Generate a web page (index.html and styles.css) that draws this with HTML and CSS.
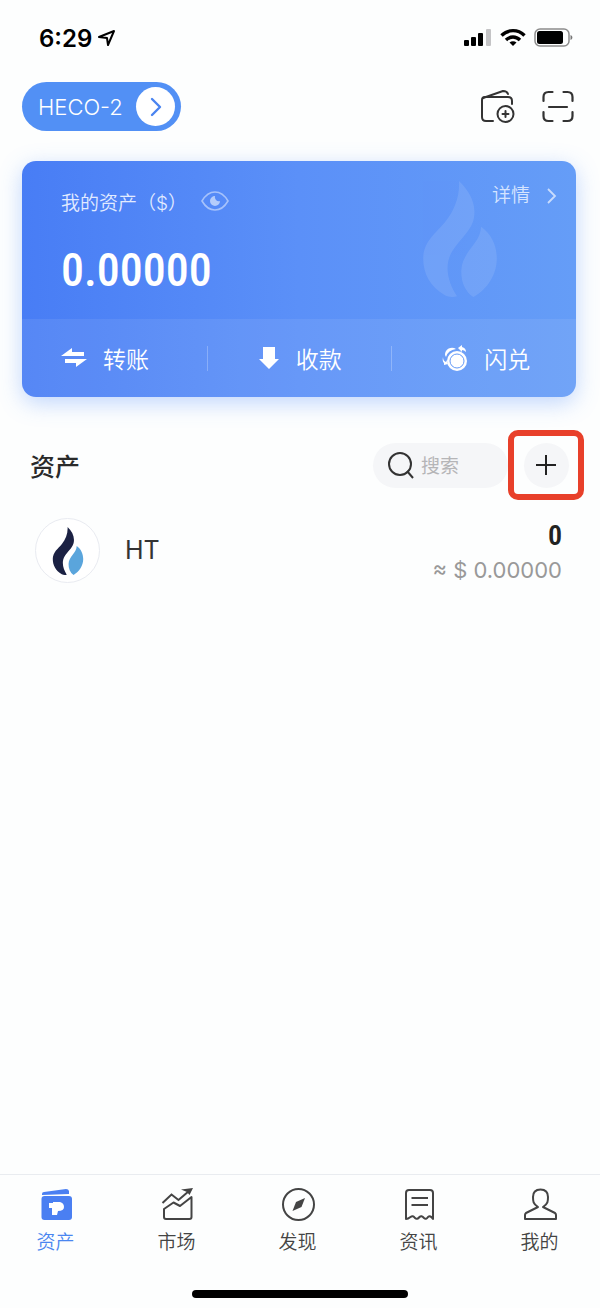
FILE: index.html
```html
<!DOCTYPE html>
<html lang="zh-CN">
<head>
    <meta charset="UTF-8">
    <meta name="viewport" content="width=device-width, initial-scale=1.0">
    <title>HECO-2 钱包</title>
    <link rel="stylesheet" href="styles.css">
</head>
<body>
    <svg width="0" height="0" class="defs" aria-hidden="true">
        <symbol id="flame" viewBox="0 0 220 347">
            <path class="flame-left" d="M107 0C140 32 158 68 152 108C148 145 112 171 88 208C60 252 74 302 101 345C88 348 76 347 65 342C20 316 0 277 0 232C0 180 40 155 66 122C94 88 110 45 107 0Z"/>
            <path class="flame-right" d="M173 137C204 158 220 194 220 232C220 280 192 324 150 347C125 330 113 302 114 268C116 210 172 188 173 137Z"/>
        </symbol>
    </svg>

    <div class="status-bar">
        <div class="status-left">
            <span class="time">6:29</span>
            <svg width="18" height="18" viewBox="0 0 18 18" fill="none" stroke="#000" stroke-width="2" stroke-linejoin="round">
                <path d="M1 8L16 2L10 16L9 9Z"/>
            </svg>
        </div>
        <div class="status-right">
            <svg width="28" height="20" viewBox="0 0 28 20">
                <rect x="0" y="12" width="5" height="6" rx="1"/>
                <rect x="7" y="9" width="5" height="9" rx="1"/>
                <rect x="14" y="5" width="5" height="13" rx="1"/>
                <rect x="22" y="1" width="5" height="17" rx="1" fill="#c4c4c6"/>
            </svg>
            <svg width="26" height="20" viewBox="0 0 26 20" fill="none" stroke="#000" stroke-width="3.4">
                <path d="M1.500 7.500C8 1 18 1 24.500 7.500"/>
                <path d="M6 12C10 8 16 8 20 12"/>
                <path d="M13 18L9.500 14.500C11.500 12.800 14.500 12.800 16.500 14.500Z" fill="#000" stroke="none"/>
            </svg>
            <svg width="39" height="20" viewBox="0 0 39 20">
                <rect x="1" y="1" width="34" height="17" rx="5" fill="none" stroke="#8c8c8c" stroke-width="1.500"/>
                <rect x="3" y="3" width="26" height="13" rx="2.500"/>
                <path d="M36.500 7C39 8 39 11 36.500 12Z" fill="#777"/>
            </svg>
        </div>
    </div>

    <header class="top-bar">
        <button class="network">
            <span>HECO-2</span>
            <span class="network-arrow">
                <svg width="14" height="20" viewBox="0 0 14 20" fill="none" stroke="#4a84f0" stroke-width="2.400" stroke-linecap="round" stroke-linejoin="round">
                    <path d="M3 2L11 10L3 18"/>
                </svg>
            </span>
        </button>
        <div class="top-actions">
            <button aria-label="添加钱包">
                <svg width="34" height="34" viewBox="0 0 34 34" fill="none" stroke="#333" stroke-width="2" stroke-linecap="round" stroke-linejoin="round">
                    <path d="M12 31H5Q1 31 1 27V10Q1 7 4 7H27Q31 7 31 11V14"/>
                    <path d="M2 8L22 1Q26 1 27 4"/>
                    <circle cx="24.500" cy="24" r="8"/>
                    <path d="M21.500 24H27.500M24.500 21V27"/>
                </svg>
            </button>
            <button aria-label="扫一扫">
                <svg width="32" height="34" viewBox="0 0 32 34" fill="none" stroke="#333" stroke-width="2.200" stroke-linecap="round">
                    <path d="M1.500 11V7Q1.500 2 6.500 2H10.500M21.500 2H25.500Q30.500 2 30.500 7V11M30.500 22V26Q30.500 31 25.500 31H21.500M10.500 31H6.500Q1.500 31 1.500 26V22"/>
                    <path d="M7 17H25"/>
                </svg>
            </button>
        </div>
    </header>

    <section class="card">
        <div class="card-main">
            <div class="card-label">
                <span>我的资产（$）</span>
                <button aria-label="隐藏金额">
                    <svg width="28" height="20" viewBox="0 0 28 20" fill="none" stroke="#a6c2fb" stroke-width="1.600">
                        <path d="M1 10C8 -2 20 -2 27 10C20 22 8 22 1 10Z"/>
                        <path d="M14 5A5 5 0 1 0 19 10A4 4 0 0 1 14 5Z" fill="#b4ccfb" stroke="none"/>
                    </svg>
                </button>
            </div>
            <div class="card-amount">0.00000</div>
            <svg class="card-flame" width="74" height="116"><use href="#flame"/></svg>
            <a href="#" class="card-detail">
                详情
                <svg width="12" height="18" viewBox="0 0 12 18" fill="none" stroke="#c9dcfd" stroke-width="1.800">
                    <path d="M2 2L9 9L2 16"/>
                </svg>
            </a>
        </div>
        <div class="card-actions">
            <button>
                <svg width="26" height="22" viewBox="0 0 26 22" fill="#fff">
                    <path d="M0 9L11 1V5H23V9Z"/>
                    <path d="M26 12L15 20V16H4V12Z"/>
                </svg>
                转账
            </button>
            <button>
                <svg width="22" height="22" viewBox="0 0 22 22" fill="#fff">
                    <path d="M5 0H17V12H21L11 22L1 12H5Z"/>
                </svg>
                收款
            </button>
            <button>
                <svg width="26" height="28" viewBox="0 0 26 28" fill="#fff">
                    <path d="M3 11A7 7 0 0 1 14 5Q6 6 4 13Z"/>
                    <path d="M16 4L20 1V3Q24 4 24 8Q22 6 20 6V8Z"/>
                    <path d="M1 13Q1 17 4 18V16L6 20L2 21V19Q0 17 1 13Z"/>
                    <circle cx="15" cy="17" r="10"/>
                    <circle cx="15" cy="17" r="7" fill="none" stroke="#6399f7"/>
                </svg>
                闪兑
            </button>
        </div>
    </section>

    <main>
        <div class="assets-head">
            <h1>资产</h1>
            <label class="search">
                <svg width="28" height="28" viewBox="0 0 28 28" fill="none" stroke="#333" stroke-width="2">
                    <circle cx="13" cy="13" r="11"/>
                    <path d="M20 20L26 27"/>
                </svg>
                <input type="text" placeholder="搜索" aria-label="搜索">
            </label>
            <div class="highlight">
                <button class="add" aria-label="添加资产">
                    <svg width="20" height="20" viewBox="0 0 20 20" stroke="#222" stroke-width="2">
                        <path d="M0 10H20M10 0V20"/>
                    </svg>
                </button>
            </div>
        </div>

        <div class="asset">
            <div class="coin"><svg width="32" height="48"><use href="#flame"/></svg></div>
            <span class="asset-name">HT</span>
            <div class="asset-value">
                <div class="asset-amount">0</div>
                <div class="asset-fiat">≈ $ 0.00000</div>
            </div>
        </div>
    </main>

    <nav class="tabs">
        <a href="#" class="active">
            <svg width="36" height="36" viewBox="0 0 36 36" fill="#4a7ff2">
                <path d="M4 9V8Q4 6 6 6L28 3Q30.500 3 31 5V8Z"/>
                <rect x="3.500" y="10" width="30.500" height="24" rx="3"/>
                <path d="M11 17H15V16H22Q26 17 26 21Q26 25 20 25L19 29H14V22H11Z" fill="#fff"/>
            </svg>
            资产
        </a>
        <a href="#">
            <svg width="36" height="36" viewBox="0 0 36 36" fill="none" stroke="#444" stroke-width="2">
                <path d="M3.500 17L12.500 8.500L19.500 14L30 5"/>
                <path d="M22 3.500L34 2L30.500 9L28 6Z" fill="#444" stroke="none"/>
                <path d="M32.500 11V31Q32.500 33 30.500 33H7Q5 33 5 31V23L14.500 16.500L21 20Z" stroke-linejoin="round"/>
            </svg>
            市场
        </a>
        <a href="#">
            <svg width="36" height="36" viewBox="0 0 36 36" fill="none" stroke="#444" stroke-width="2">
                <circle cx="18.500" cy="18.500" r="15.500"/>
                <path d="M25 12L21.500 21L12.500 25L16 16Z" fill="#444" stroke="none"/>
            </svg>
            发现
        </a>
        <a href="#">
            <svg width="36" height="36" viewBox="0 0 36 36" fill="none" stroke="#444" stroke-width="2" stroke-linejoin="round">
                <path d="M5 33V7Q5 4 8 4H29Q32 4 32 7V33Q29.500 29 27 31Q25 34 23 32Q20.500 29 18.500 31Q16 34 14 32Q12 29 9.500 31Q7 33 5 33Z"/>
                <path d="M10.500 12H27M10.500 19H27"/>
            </svg>
            资讯
        </a>
        <a href="#">
            <svg width="36" height="36" viewBox="0 0 36 36" fill="none" stroke="#444" stroke-width="2" stroke-linejoin="round">
                <path d="M16 21C11 18 11 15 11 11C11 6 14 3.500 18.500 3.500S26 6 26 11C26 15 26 18 21 21L33 27Q34 28 34 29V33H3V29Q3 28 4 27Z"/>
            </svg>
            我的
        </a>
    </nav>
    <div class="home-bar"></div>
</body>
</html>
```
FILE: styles.css
```css
* {
    box-sizing: border-box;
}
body {
    margin: 0;
    min-height: 100vh;
    display: flex;
    flex-direction: column;
    background: #fdfefe;
    color: #333;
    font-family: Inter, "Noto Sans CJK SC", sans-serif;
}
svg {
    display: block;
    flex: none;
}
button {
    padding: 0;
    border: none;
    background: none;
    color: inherit;
    font: inherit;
    cursor: pointer;
}
a {
    color: inherit;
    text-decoration: none;
}
.defs {
    position: absolute;
}

/* status bar */
.status-bar {
    height: 76px;
    padding: 0 27px 0 39px;
    display: flex;
    align-items: center;
    justify-content: space-between;
    color: #000;
}
.status-left {
    display: flex;
    align-items: center;
    gap: 6px;
}
.time {
    font-size: 24px;
    font-weight: 600;
}
.status-right {
    display: flex;
    gap: 8px;
}

/* network + actions */
.top-bar {
    padding: 6px 26px 0 22px;
    display: flex;
    align-items: center;
    justify-content: space-between;
}
.network {
    height: 49px;
    padding: 0 6px 0 16px;
    display: flex;
    align-items: center;
    gap: 13px;
    border-radius: 25px;
    background: #5290f5;
    color: #fff;
    font-size: 22px;
    font-weight: 300;
}
.network-arrow {
    width: 39px;
    height: 39px;
    padding-left: 2px;
    display: flex;
    align-items: center;
    justify-content: center;
    border-radius: 50%;
    background: #fff;
}
.top-actions {
    display: flex;
    gap: 27px;
}

/* balance card */
.card {
    margin: 30px 24px 0 22px;
    border-radius: 14px;
    overflow: hidden;
    background: linear-gradient(90deg, #487df5, #5b90f8 50%, #659df7);
    box-shadow: 0 6px 22px rgba(80, 140, 250, 0.35);
    color: #fff;
    font-weight: 350;
}
.card-main {
    position: relative;
    height: 158px;
    padding: 25px 39px 0;
}
.card-label {
    display: flex;
    align-items: center;
    gap: 14px;
    height: 30px;
    font-size: 19px;
    color: #e2ebff;
}
.card-amount {
    margin-top: 26px;
    font-family: "Roboto Condensed", Roboto, sans-serif;
    font-size: 46px;
    font-weight: 500;
    line-height: 56px;
}
.card-flame {
    position: absolute;
    top: 20px;
    right: 79px;
    fill: #fff;
    opacity: 0.1;
}
.card-detail {
    position: absolute;
    top: 20px;
    right: 18px;
    display: flex;
    align-items: center;
    gap: 16px;
    font-size: 19px;
    line-height: 30px;
    color: #d5e4ff;
}
.card-actions {
    display: grid;
    grid-template-columns: repeat(3, 1fr);
    height: 78px;
    background: rgba(255, 255, 255, 0.08);
}
.card-actions button {
    position: relative;
    display: flex;
    align-items: center;
    gap: 16px;
    padding-left: 51px;
    font-size: 23px;
}
.card-actions button:first-child {
    padding-left: 39px;
}
.card-actions button + button::before {
    content: "";
    position: absolute;
    left: 0;
    top: 27px;
    width: 1px;
    height: 25px;
    background: rgba(255, 255, 255, 0.25);
}

/* asset list */
main {
    flex: 1;
    padding-top: 33px;
}
.assets-head {
    display: flex;
    align-items: center;
    padding: 0 16px 0 30px;
}
.assets-head h1 {
    flex: 1;
    margin: 0;
    font-size: 25px;
    font-weight: 500;
    color: #2a2a2a;
}
.search {
    width: 135px;
    height: 45px;
    padding-left: 14px;
    display: flex;
    align-items: center;
    gap: 6px;
    border-radius: 23px;
    background: #f5f6f8;
}
.search input {
    flex: 1;
    min-width: 0;
    padding: 2px 0 0;
    border: none;
    outline: none;
    background: none;
    font: inherit;
    font-size: 19px;
    color: #333;
}
.search input::placeholder {
    color: #b5b5b7;
}
.highlight {
    width: 76px;
    height: 70px;
    display: flex;
    align-items: center;
    justify-content: center;
    border: 6px solid #e8402a;
    border-radius: 10px;
}
.add {
    width: 45px;
    height: 45px;
    display: flex;
    align-items: center;
    justify-content: center;
    border-radius: 50%;
    background: #f5f6f8;
}
.asset {
    display: flex;
    align-items: flex-start;
    padding: 18px 38px 0 35px;
}
.coin {
    width: 65px;
    height: 65px;
    display: flex;
    align-items: center;
    justify-content: center;
    border: 1px solid #e9ebf1;
    border-radius: 50%;
    background: #fff;
    fill: #1b2143;
    --flame-right: #5aa5dc;
}
.flame-right {
    fill: var(--flame-right, #fff);
}
.asset-name {
    flex: 1;
    margin-left: 25px;
    font-size: 25px;
    line-height: 65px;
}
.asset-value {
    padding-top: 1px;
    text-align: right;
}
.asset-amount {
    font-family: "Roboto Condensed", Roboto, sans-serif;
    font-size: 28px;
    font-weight: 600;
    line-height: 34px;
    color: #222;
}
.asset-fiat {
    font-size: 22px;
    line-height: 34px;
    color: #999;
}

/* bottom tabs */
.tabs {
    display: flex;
    margin-left: -5px;
    padding-top: 11px;
    border-top: 1px solid #e9ecf0;
}
.tabs a {
    flex: 1;
    display: flex;
    flex-direction: column;
    align-items: center;
    gap: 6px;
    font-size: 19px;
    font-weight: 350;
    line-height: 30px;
    color: #444;
}
.tabs a.active {
    color: #4a86f0;
}
.home-bar {
    width: 36%;
    height: 8px;
    margin: 32px auto 10px;
    border-radius: 4px;
    background: #000;
}
```
